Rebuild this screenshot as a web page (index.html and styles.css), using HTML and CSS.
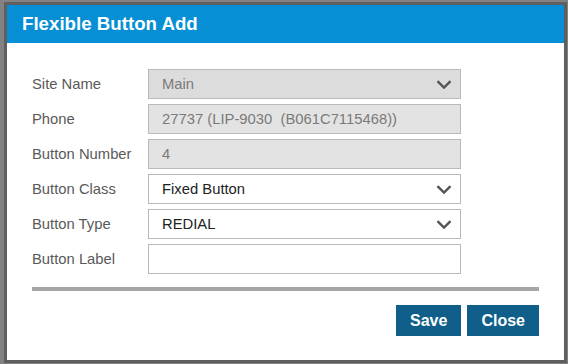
FILE: index.html
```html
<!DOCTYPE html>
<html lang="en">
<head>
    <meta charset="UTF-8">
    <meta name="viewport" content="width=device-width, initial-scale=1.0">
    <title>Flexible Button Add</title>
    <link rel="stylesheet" href="styles.css">
</head>
<body>
    <div class="dialog">
        <div class="dialog-header">Flexible Button Add</div>
        <div class="dialog-body">
            <div class="form-grid">
                <label class="field-label">Site Name</label>
                <div class="field field-disabled field-select">
                    <span class="field-value">Main</span>
                    <svg class="chevron" width="16" height="9" viewBox="0 0 16 9"><polyline points="1.5,1.2 8,7.6 14.5,1.2" /></svg>
                </div>

                <label class="field-label">Phone</label>
                <div class="field field-disabled field-light">
                    <span class="field-value">27737 (LIP-9030&nbsp; (B061C7115468))</span>
                </div>

                <label class="field-label">Button Number</label>
                <div class="field field-disabled field-light">
                    <span class="field-value">4</span>
                </div>

                <label class="field-label">Button Class</label>
                <div class="field field-select">
                    <span class="field-value">Fixed Button</span>
                    <svg class="chevron" width="16" height="9" viewBox="0 0 16 9"><polyline points="1.5,1.2 8,7.6 14.5,1.2" /></svg>
                </div>

                <label class="field-label">Button Type</label>
                <div class="field field-select">
                    <span class="field-value">REDIAL</span>
                    <svg class="chevron" width="16" height="9" viewBox="0 0 16 9"><polyline points="1.5,1.2 8,7.6 14.5,1.2" /></svg>
                </div>

                <label class="field-label">Button Label</label>
                <div class="field">
                    <span class="field-value"></span>
                </div>
            </div>

            <div class="divider"></div>

            <div class="dialog-footer">
                <button type="button" class="btn">Save</button>
                <button type="button" class="btn">Close</button>
            </div>
        </div>
    </div>
</body>
</html>
```

FILE: styles.css
```css
* {
    box-sizing: border-box;
}

body {
    margin: 0;
    background-color: #828282;
    font-family: "Liberation Sans", Arial, sans-serif;
}

.dialog {
    width: 563px;
    height: 361px;
    margin: 2px 0 0 4px;
    border: 3px solid #5f5f5f;
    background-color: #fff;
}

.dialog-header {
    height: 38px;
    line-height: 38px;
    padding-left: 15px;
    background-color: #068fd4;
    color: #fff;
    font-size: 18.7px;
    font-weight: bold;
}

.dialog-body {
    padding: 26px 25px 0 25px;
}

.form-grid {
    display: grid;
    grid-template-columns: 116px 313px;
    grid-auto-rows: 30px;
    row-gap: 5px;
}

.field-label {
    display: flex;
    align-items: center;
    padding-bottom: 1px;
    color: #595959;
    font-size: 14.8px;
}

.field {
    display: flex;
    align-items: center;
    padding: 0 8px 0 13px;
    border: 1px solid #b9b9b9;
    background-color: #fff;
    color: #222;
    font-size: 14.8px;
}

.field-disabled {
    background-color: #dcdcdd;
    color: #7a7a7a;
}

.field-light {
    background-color: #e3e3e3;
}

.field-value {
    flex: 1;
    white-space: pre;
}

.chevron polyline {
    fill: none;
    stroke: #555;
    stroke-width: 2.4;
}

.divider {
    height: 4px;
    margin-top: 13px;
    background-color: #a6a6a6;
}

.dialog-footer {
    display: flex;
    justify-content: flex-end;
    gap: 6px;
    margin-top: 14px;
}

.btn {
    height: 31px;
    padding: 0 14px;
    border: none;
    background-color: #0f5f8a;
    color: #fff;
    font-family: "Liberation Sans", Arial, sans-serif;
    font-size: 16px;
    font-weight: bold;
}
```
